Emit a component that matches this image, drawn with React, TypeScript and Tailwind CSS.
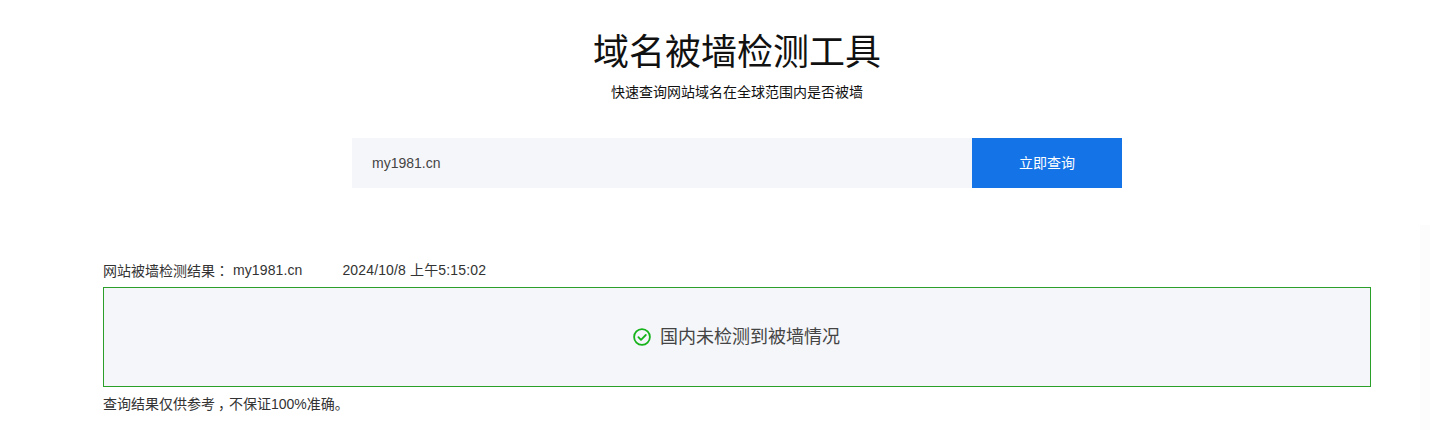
import React from "react";

export default function App() {
  return (
    <div className="relative h-[430px] w-[1430px] overflow-hidden bg-white font-['Liberation_Sans','Noto_Sans_CJK_SC',sans-serif] text-[14px] text-[#333]">
      <div className="ml-[103px] flex w-[1268px] flex-col">
        <div className="flex flex-col items-center">
          <h1 className="mt-[29px] text-[36px] leading-[48px] font-normal text-[#111]">域名被墙检测工具</h1>
          <p className="mt-[5px] text-[14px] leading-[20px] text-[#111]">快速查询网站域名在全球范围内是否被墙</p>
          <div className="mt-[36px] flex h-[50px] w-[770px]">
            <div className="flex flex-1 items-center bg-[#f5f6fa] pl-[20px] text-[14px] text-[#444]">my1981.cn</div>
            <button className="h-full w-[150px] bg-[#1473e6] text-[14px] text-white">立即查询</button>
          </div>
        </div>
        <div className="mt-[72px] flex h-[20px] items-center leading-[20px]">
          <span>网站被墙检测结果<span className="font-['Noto_Sans_CJK_TC',sans-serif]">：</span></span>
          <span className="ml-[4px] tracking-[0.1px]">my1981.cn</span>
          <span className="ml-[40px] tracking-[0.15px]">2024/10/8 上午5:15:02</span>
        </div>
        <div className="mt-[7px] flex h-[100px] items-center justify-center gap-[9px] border border-[#2a9f2a] bg-[#f4f6fa] pr-[1px] text-[18px] text-[#444]">
          <svg width="18" height="18" viewBox="0 0 18 18" fill="none" stroke="#17b31b" strokeWidth="1.8" strokeLinecap="round" strokeLinejoin="round">
            <circle cx="9" cy="9" r="7.9" />
            <path d="M5.4 9.2l2.6 2.6 4.8-4.8" />
          </svg>
          <span>国内未检测到被墙情况</span>
        </div>
        <p className="mt-[7px] leading-[20px]">查询结果仅供参考<span className="mr-[4px] ml-[3px] [font-feature-settings:'halt']">，</span>不保证100%准确。</p>
      </div>
      <div className="absolute top-[225px] right-0 h-[205px] w-[10px] bg-[#fcfcfc]" />
    </div>
  );
}
